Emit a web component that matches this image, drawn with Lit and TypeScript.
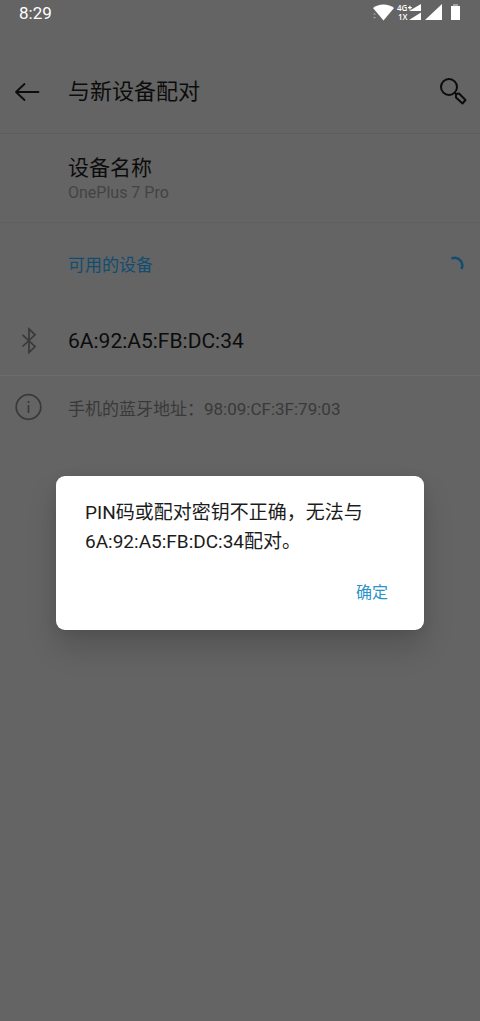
import { LitElement, html, css } from "lit";
import { customElement, property } from "lit/decorators.js";

@customElement("status-bar")
class StatusBar extends LitElement {
  @property() time = "";

  static styles = css`
    :host {
      display: flex;
      align-items: center;
      justify-content: space-between;
      height: 26px;
      padding: 0 18px 0 19px;
      color: #fff;
      font-size: 17px;
      line-height: 26px;
    }
    .icons {
      display: block;
    }
    .net {
      font: 600 8px "Open Sans", "Noto Sans", sans-serif;
    }
  `;

  render() {
    return html`
      <span>${this.time}</span>
      <svg class="icons" width="92" height="26" viewBox="0 0 92 26" fill="#fff" role="img" aria-label="Wi-Fi, 4G, 1X">
        <path d="M3 8C8 3.300 19 3.300 24 8L13.500 20.500Z" />
        <path d="M3 14.500l1.500-1.500 1.500 1.500zM3 17l1.500 1.500L6 17z" opacity=".45" />
        <text class="net" x="27" y="11">4G</text>
        <text class="net" x="28" y="20">1X</text>
        <path d="M38 7h1.300V5.700h1.200V7h1.300v1.200h-1.300v1.300h-1.200V8.200H38zM51 4v7H39zM51 12.500v7.500H39z" />
        <path d="M72 4v16H55z" />
        <path d="M81 6h9v14h-9z" />
        <path d="M83 4h5v2h-5z" opacity=".4" />
      </svg>
    `;
  }
}

@customElement("alert-dialog")
class AlertDialog extends LitElement {
  @property() message = "";

  static styles = css`
    :host {
      display: block;
      box-sizing: border-box;
      width: 100%;
      max-width: 400px;
      padding: 22px 28px 21px 29px;
      border-radius: 9px;
      background: #fff;
      box-shadow: 0 18px 30px rgba(0, 0, 0, 0.16), 0 2px 12px rgba(0, 0, 0, 0.08);
    }
    .message {
      margin: 0;
      color: #1c1c1c;
      font-size: 19px;
      line-height: 29px;
    }
    .actions {
      display: flex;
      justify-content: flex-end;
      margin-top: 21px;
    }
    .confirm {
      padding: 4px 8px;
      border: 0;
      background: none;
      color: #2b93c8;
      font: inherit;
      font-size: 16px;
      line-height: 24px;
      cursor: pointer;
    }
  `;

  render() {
    return html`
      <p class="message">${this.message}</p>
      <div class="actions">
        <button class="confirm" type="button">确定</button>
      </div>
    `;
  }
}

@customElement("app-root")
class AppRoot extends LitElement {
  static styles = css`
    :host {
      display: block;
      position: relative;
      min-height: 100vh;
      background: #646464;
      color: #0c0c0c;
      font-family: Roboto, "Noto Sans CJK SC", sans-serif;
    }
    header {
      display: flex;
      align-items: center;
      height: 82px;
      margin-top: 25px;
      padding: 0 10px 0 11px;
      border-bottom: 1px solid #5d5d5d;
    }
    h1,
    h2,
    p {
      margin: 0;
      font-weight: 400;
    }
    h1 {
      flex: 1;
      margin-left: 25px;
      font-size: 22px;
      line-height: 32px;
    }
    .icon-button {
      display: flex;
      padding: 0;
      border: 0;
      background: none;
      color: inherit;
      cursor: pointer;
    }
    svg {
      display: block;
      fill: none;
      stroke: currentColor;
    }
    .name {
      padding: 19px 16px 19px 68px;
      border-bottom: 1px solid #5f5f5f;
    }
    .name h2 {
      font-size: 21px;
      line-height: 30px;
    }
    .name p {
      color: #434343;
      font-size: 16px;
      line-height: 20px;
    }
    .section {
      display: flex;
      align-items: center;
      justify-content: space-between;
      height: 84px;
      padding: 0 16px 0 68px;
      color: #104d70;
    }
    .section h2 {
      font-size: 17px;
      line-height: 24px;
    }
    .row {
      display: grid;
      grid-template-columns: 28px 1fr;
      align-items: center;
      column-gap: 25px;
      padding: 0 16px 0 15px;
    }
    .device {
      height: 68px;
      border-bottom: 1px solid #6c6c6c;
      font-size: 21px;
    }
    .device svg,
    .address {
      color: #393939;
    }
    .address {
      height: 62px;
      font-size: 17px;
    }
    .overlay {
      position: absolute;
      inset: 0;
      display: flex;
      align-items: center;
      justify-content: center;
      padding: 84px 56px 0;
    }
  `;

  render() {
    return html`
      <status-bar time="8:29"></status-bar>
      <header>
        <button class="icon-button" type="button" aria-label="返回">
          <svg width="32" height="32" viewBox="0 0 32 32" stroke-width="1.800" stroke-linecap="round" stroke-linejoin="round">
            <path d="M27.500 16H5M13.500 8L5 16l8.500 8" />
          </svg>
        </button>
        <h1>与新设备配对</h1>
        <button class="icon-button" type="button" aria-label="搜索">
          <svg width="32" height="32" viewBox="0 0 32 32" stroke-width="2" stroke-linejoin="round">
            <circle cx="11" cy="11" r="8" />
            <path d="M16.700 16.700l2 2M18 21.500v-3.500l3-.500 6.500 6.500-3 3.500z" />
          </svg>
        </button>
      </header>
      <main>
        <section class="name">
          <h2>设备名称</h2>
          <p>OnePlus 7 Pro</p>
        </section>
        <section class="section">
          <h2>可用的设备</h2>
          <svg width="18" height="18" viewBox="0 0 18 18" stroke-width="2.500" role="img" aria-label="正在扫描">
            <path d="M5.500 2.500C12-.300 18.500 6 15.500 13" />
          </svg>
        </section>
        <section class="row device">
          <svg width="28" height="28" viewBox="0 0 28 28" stroke-width="1.700" stroke-linejoin="miter">
            <path d="M7.500 7.800L20 19.500 14 25.500V2L20 7.800 7.500 19.500" />
          </svg>
          <span>6A:92:A5:FB:DC:34</span>
        </section>
        <section class="row address">
          <svg width="28" height="28" viewBox="0 0 28 28" stroke-width="1.700">
            <circle cx="13.500" cy="14" r="12.300" />
            <path d="M13.500 12V20M13.500 8v2" />
          </svg>
          <p>手机的蓝牙地址：98:09:CF:3F:79:03</p>
        </section>
      </main>
      <div class="overlay" role="alertdialog" aria-modal="true">
        <alert-dialog message="PIN码或配对密钥不正确，无法与6A:92:A5:FB:DC:34配对。"></alert-dialog>
      </div>
    `;
  }
}
